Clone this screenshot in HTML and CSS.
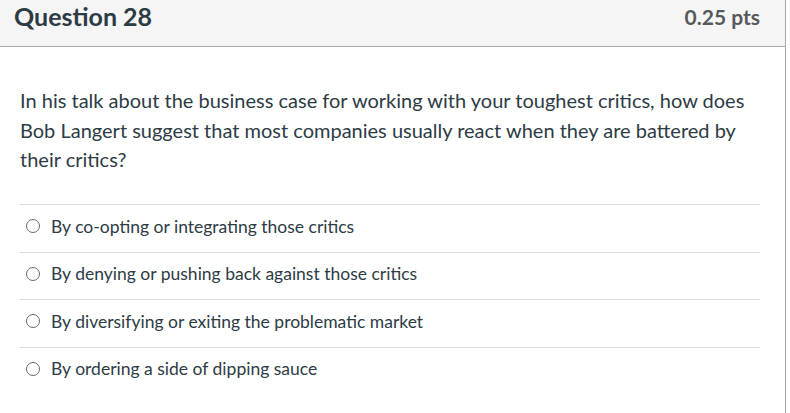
FILE: index.html
```html
<!DOCTYPE html>
<html>
<head>
<meta charset="utf-8">
<link rel="stylesheet" href="styles.css">
</head>
<body>
<div class="question">
  <div class="header">
    <div class="title">Question 28</div>
    <div class="pts">0.25 pts</div>
  </div>
  <div class="content">
    <p class="text">In his talk about the business case for working with your toughest critics, how does Bob Langert suggest that most companies usually react when they are battered by their critics?</p>
    <div class="answers">
      <div class="answer"><span class="radio"></span><span class="label">By co-opting or integrating those critics</span></div>
      <div class="answer"><span class="radio"></span><span class="label">By denying or pushing back against those critics</span></div>
      <div class="answer"><span class="radio"></span><span class="label">By diversifying or exiting the problematic market</span></div>
      <div class="answer"><span class="radio"></span><span class="label">By ordering a side of dipping sauce</span></div>
    </div>
  </div>
</div>
</body>
</html>
```
FILE: styles.css
```css
html, body {
  margin: 0;
  padding: 0;
  background: #fff;
}
body {
  font-family: Lato, "Open Sans", sans-serif;
  color: #2d3b45;
}
.question {
  width: 786px;
  border-right: 1px solid #a8a8a8;
  height: 413px;
  box-sizing: border-box;
}
.header {
  background: #f5f5f5;
  height: 46px;
  border-bottom: 1px solid #a9a9a9;
  display: flex;
  justify-content: space-between;
  align-items: center;
  padding: 0 25px 0 14px;
  box-sizing: content-box;
}
.title {
  font-size: 25px;
  font-weight: 700;
  color: #2d3b45;
  margin-top: -14px;
}
.pts {
  font-size: 21px;
  font-weight: 700;
  color: #565a5c;
  margin-top: -14px;
}
.content {
  padding: 0 25px 0 20px;
}
.text {
  margin: 0;
  padding-top: 39px;
  font-size: 20px;
  line-height: 29.5px;
  color: #2d3b45;
  width: 740px;
}
.answers {
  margin-top: 29.5px;
}
.answer {
  border-top: 1px solid #dadada;
  height: 46.5px;
  box-sizing: content-box;
  display: flex;
  align-items: center;
  padding-bottom: 0;
  font-size: 17.5px;
  color: #2d3b45;
}
.label {
  margin-top: -4px;
}
.radio {
  width: 12px;
  height: 12px;
  border: 1px solid #6b6b6b;
  border-radius: 50%;
  margin-left: 6px;
  margin-right: 11px;
  margin-top: -4px;
  flex: none;
}
```
